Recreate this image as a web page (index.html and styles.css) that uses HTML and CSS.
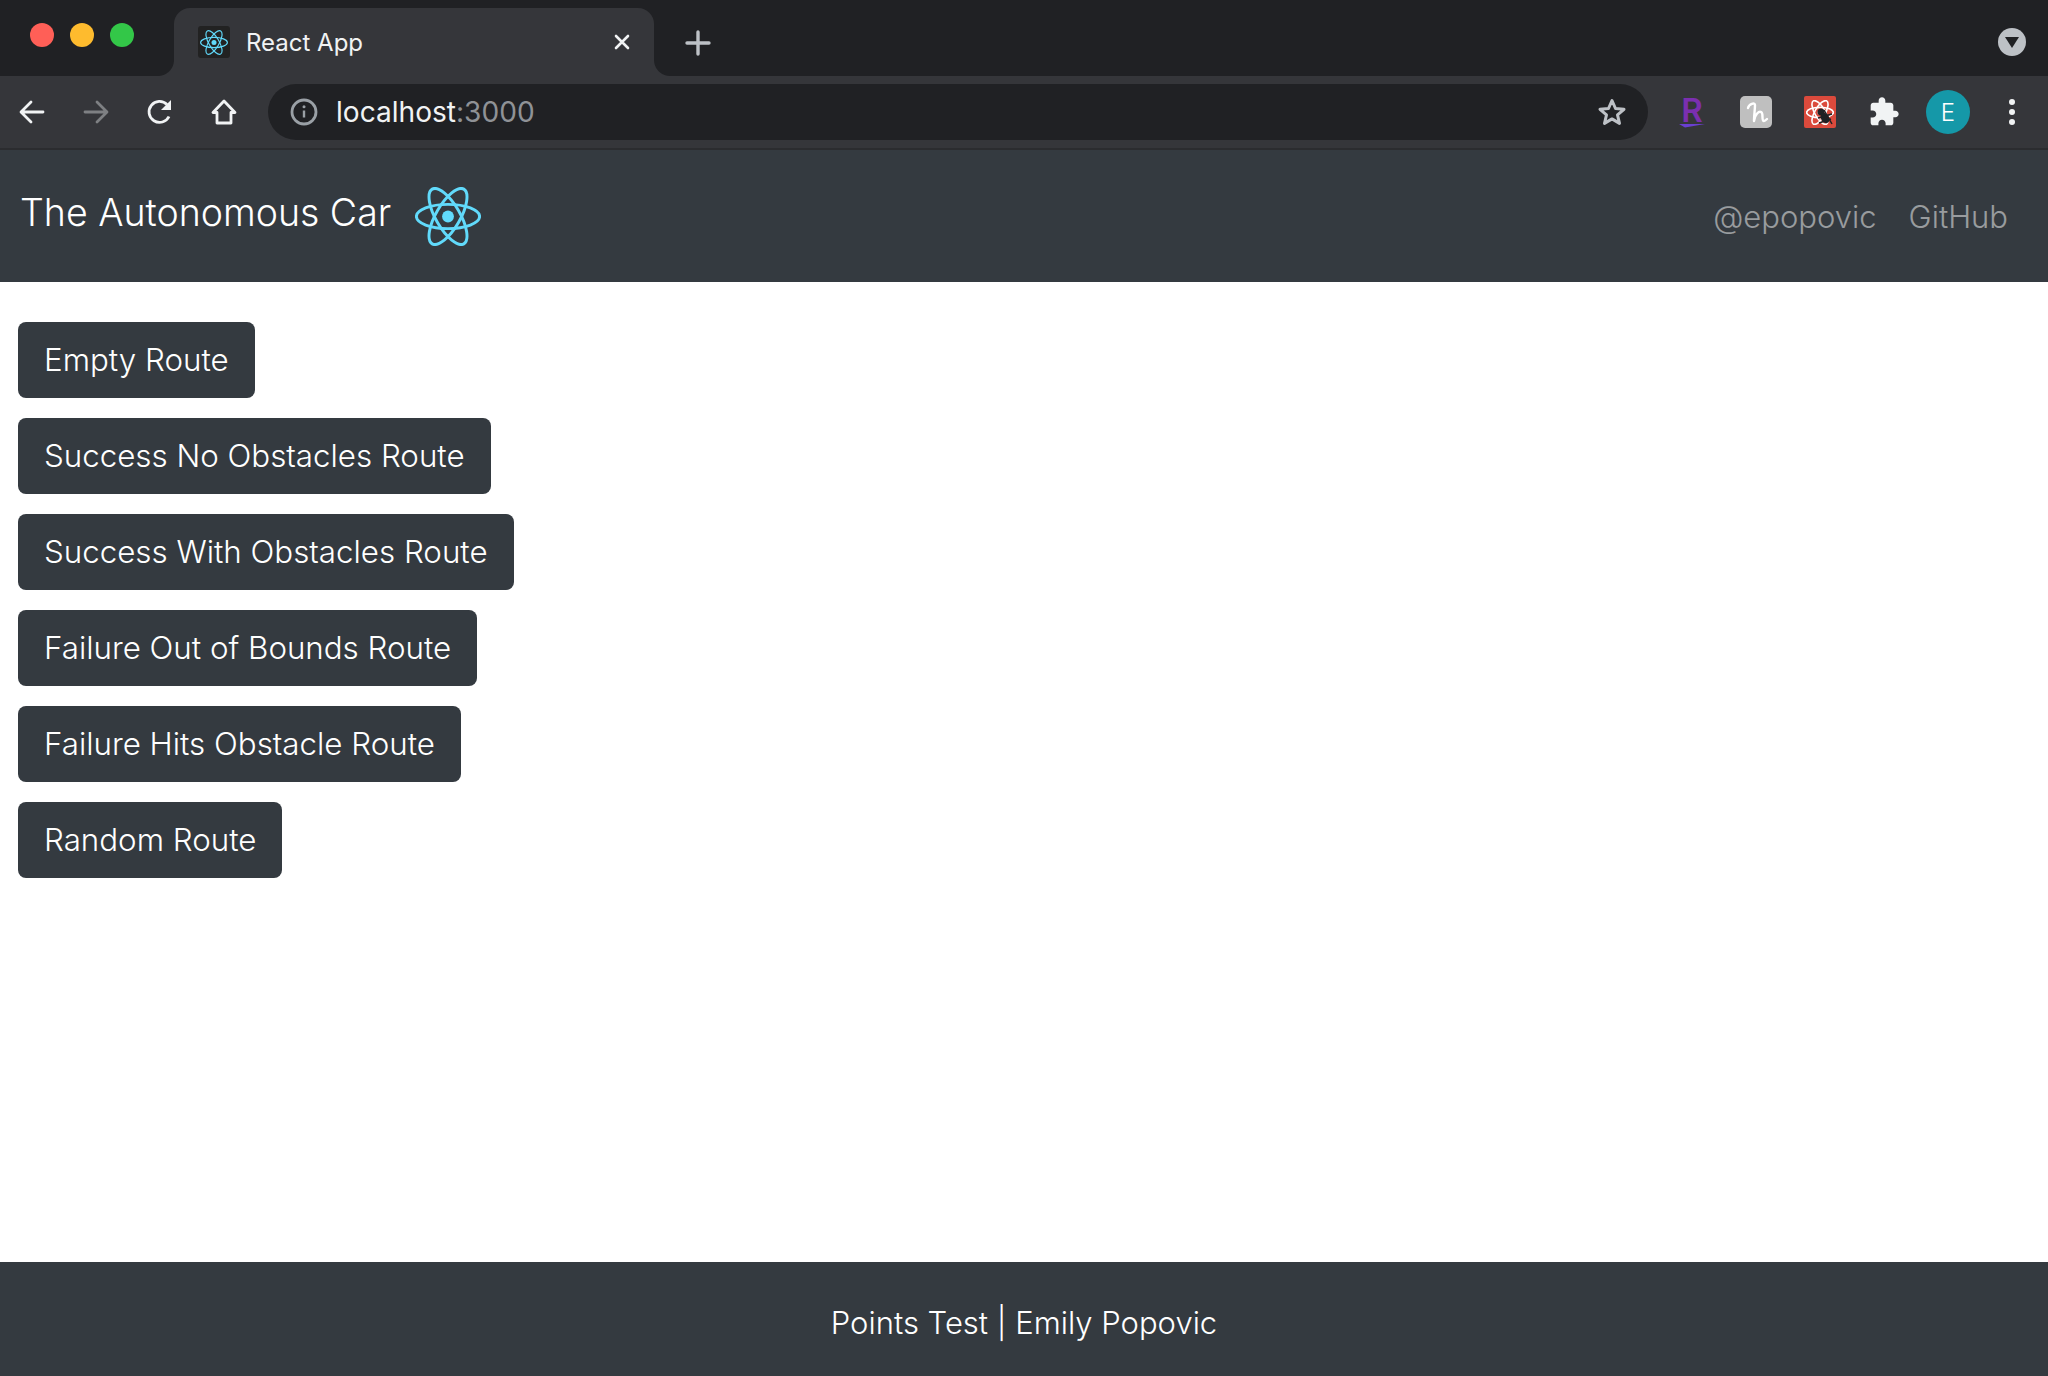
FILE: index.html
```html
<!DOCTYPE html>
<html lang="en">
<head>
    <meta charset="UTF-8">
    <title>React App</title>
    <link rel="stylesheet" href="styles.css">
</head>
<body>
    <svg class="defs" width="0" height="0">
        <symbol id="atom" viewBox="0.7 4 62.6 56">
            <circle cx="32" cy="32" r="5.6" fill="currentColor"/>
            <g fill="none" stroke="currentColor">
                <ellipse cx="32" cy="32" rx="30" ry="11.5"/>
                <ellipse cx="32" cy="32" rx="30" ry="11.5" transform="rotate(60 32 32)"/>
                <ellipse cx="32" cy="32" rx="30" ry="11.5" transform="rotate(120 32 32)"/>
            </g>
        </symbol>
    </svg>

    <!-- Browser chrome -->
    <div class="tabstrip">
        <div class="lights">
            <span class="light red"></span>
            <span class="light yellow"></span>
            <span class="light green"></span>
        </div>
        <div class="tab">
            <span class="favicon"><svg width="28" height="25"><use href="#atom"/></svg></span>
            <span class="tab-title">React App</span>
            <svg class="tab-close" width="16" height="16" viewBox="0 0 16 16"><path d="M2 2l12 12M14 2L2 14" stroke="#f1f3f4" stroke-width="2.6" stroke-linecap="round"/></svg>
        </div>
        <svg class="new-tab" width="26" height="26" viewBox="0 0 26 26"><path d="M13 2v22M2 13h22" stroke="#bdc1c6" stroke-width="3.4" stroke-linecap="round"/></svg>
        <span class="tab-search"><svg width="14" height="11" viewBox="0 0 14 11"><path d="M0 0h14L7 11z" fill="#202124"/></svg></span>
    </div>

    <div class="toolbar">
        <svg class="tool" width="28" height="28" viewBox="0 0 28 28"><path d="M25 14H4M13 4L3 14l10 10" fill="none" stroke="#f1f3f4" stroke-width="2.8" stroke-linecap="round" stroke-linejoin="round"/></svg>
        <svg class="tool" width="28" height="28" viewBox="0 0 28 28"><path d="M3 14h21M15 4l10 10-10 10" fill="none" stroke="#7e8083" stroke-width="2.8" stroke-linecap="round" stroke-linejoin="round"/></svg>
        <svg class="tool" width="28" height="28" viewBox="0 0 28 28"><path d="M23 18.500A10.500 10.500 0 1 1 21 6.500" fill="none" stroke="#f1f3f4" stroke-width="2.8"/><path d="M25 2v10H15z" fill="#f1f3f4"/></svg>
        <svg class="tool" width="28" height="28" viewBox="0 0 28 28"><path d="M14 3L3 14.500h4V25h14V14.500h4z" fill="none" stroke="#f1f3f4" stroke-width="2.8" stroke-linejoin="round"/></svg>
        <div class="omnibox">
            <svg width="28" height="28" viewBox="0 0 28 28"><circle cx="14" cy="14" r="12" fill="none" stroke="#9aa0a6" stroke-width="2.800"/><path d="M14 12.500v7" stroke="#9aa0a6" stroke-width="2.400"/><circle cx="14" cy="8.800" r="1.500" fill="#9aa0a6"/></svg>
            <span class="url">localhost<span class="port">:3000</span></span>
            <svg class="star" width="30" height="30" viewBox="0 0 30 30"><path d="M15 3.500l3.500 8 8.500.8-6.500 5.600 2 8.500L15 21.900l-7.500 4.500 2-8.500L3 12.300l8.500-.8z" fill="none" stroke="#bdc1c6" stroke-width="3" stroke-linejoin="round"/></svg>
        </div>
        <div class="extensions">
            <span class="ext ext-r">R<svg width="26" height="4" viewBox="0 0 26 4"><path d="M0 0h26L6 3.500z" fill="#6a3fd1"/></svg></span>
            <span class="ext ext-h"><svg width="32" height="32" viewBox="0 0 32 32"><path d="M8 12C9 8 15 6 15 9 15 13 14 20 14 25 15 18 19 15 21 16 24 17 21 25 24 25 25 25 26 24 27 23" fill="none" stroke="white" stroke-width="2.400" stroke-linecap="round" stroke-linejoin="round"/></svg></span>
            <span class="ext ext-bug">
                <svg width="28" height="25"><use href="#atom"/></svg>
                <svg class="bug" width="18" height="18" viewBox="0 0 18 18"><circle cx="6" cy="5" r="3.500" fill="#202124"/><ellipse cx="10" cy="11" rx="4" ry="5.500" fill="#202124" transform="rotate(-30 10 11)"/><path d="M3 11l14-4M4 16l12-4M9 3l8 14" stroke="#202124" stroke-width="1.500"/></svg>
            </span>
            <svg class="ext" width="32" height="32" viewBox="0 0 24 24"><path d="M20.500 11H19V7c0-1.100-.9-2-2-2h-4V3.500C13 2.120 11.880 1 10.500 1S8 2.120 8 3.500V5H4c-1.100 0-1.990.9-1.990 2v3.800H3.500c1.490 0 2.700 1.210 2.700 2.700s-1.210 2.700-2.700 2.700H2V20c0 1.100.9 2 2 2h3.800v-1.500c0-1.490 1.210-2.700 2.700-2.700 1.490 0 2.700 1.210 2.700 2.700V22H17c1.100 0 2-.9 2-2v-4h1.500c1.380 0 2.500-1.120 2.500-2.500S21.880 11 20.500 11z" fill="#f1f3f4"/></svg>
            <span class="avatar">E</span>
            <span class="menu-dots"><i></i><i></i><i></i></span>
        </div>
    </div>

    <!-- Page -->
    <nav class="navbar">
        <div class="brand">
            <span class="brand-title">The Autonomous Car</span>
            <svg class="brand-logo" width="66" height="59"><use href="#atom"/></svg>
        </div>
        <div class="nav-links">
            <a href="#">@epopovic</a>
            <a href="#">GitHub</a>
        </div>
    </nav>

    <main class="routes">
        <button type="button">Empty Route</button>
        <button type="button">Success No Obstacles Route</button>
        <button type="button">Success With Obstacles Route</button>
        <button type="button">Failure Out of Bounds Route</button>
        <button type="button">Failure Hits Obstacle Route</button>
        <button type="button">Random Route</button>
    </main>

    <footer class="footer">Points Test | Emily Popovic</footer>
</body>
</html>
```

FILE: styles.css
```css
html, body {
    height: 100%;
}

body {
    margin: 0;
    display: flex;
    flex-direction: column;
    height: 1376px;
    overflow: hidden;
    background: white;
    font-family: Inter, "Noto Sans", sans-serif;
}

.defs {
    position: absolute;
}

/* Browser chrome */
.tabstrip {
    display: flex;
    align-items: flex-end;
    height: 76px;
    flex: none;
    background: #202124;
}

.lights {
    display: flex;
    gap: 16px;
    width: 174px;
    padding: 23px 0 0 30px;
    align-self: flex-start;
    box-sizing: border-box;
}

.light {
    width: 24px;
    height: 24px;
    border-radius: 50%;
}

.red { background: #ff5f57; }
.yellow { background: #febb2e; }
.green { background: #33c748; }

.tab {
    position: relative;
    display: flex;
    align-items: center;
    width: 480px;
    height: 68px;
    padding: 0 24px 0 24px;
    box-sizing: border-box;
    background: #35363a;
    border-radius: 16px 16px 0 0;
    color: #f1f3f4;
}

/* concave corners at the foot of the tab */
.tab::before,
.tab::after {
    content: "";
    position: absolute;
    bottom: 0;
    width: 16px;
    height: 16px;
}

.tab::before {
    left: -16px;
    background: radial-gradient(circle at 0 0, #202124 15.5px, #35363a 16.5px);
}

.tab::after {
    right: -16px;
    background: radial-gradient(circle at 100% 0, #202124 15.5px, #35363a 16.5px);
}

.favicon {
    display: flex;
    align-items: center;
    justify-content: center;
    width: 32px;
    height: 32px;
    border-radius: 3px;
    background: #222;
    color: #61dafb;
    stroke-width: 2.6;
}

.tab-title {
    margin-left: 16px;
    font-size: 24px;
    flex: 1;
}

.new-tab {
    margin: 0 0 20px 31px;
}

.tab-search {
    display: flex;
    align-items: center;
    justify-content: center;
    width: 28px;
    height: 28px;
    margin: 0 22px 20px auto;
    border-radius: 50%;
    background: #bdc1c6;
}

.toolbar {
    display: flex;
    align-items: center;
    height: 72px;
    flex: none;
    padding: 0 0 0 18px;
    background: #35363a;
    border-bottom: 2px solid #2b2c2f;
}

.tool {
    margin-right: 36px;
    flex: none;
}

.tool:nth-of-type(4) {
    margin-right: 30px;
}

.omnibox {
    display: flex;
    align-items: center;
    width: 1380px;
    height: 56px;
    padding: 0 21px 0 22px;
    box-sizing: border-box;
    flex: none;
    background: #202124;
    border-radius: 28px;
}

.url {
    margin-left: 18px;
    flex: 1;
    font-size: 28.1px;
    color: #f1f3f4;
}

.port {
    color: #8f9296;
}

.extensions {
    display: flex;
    align-items: center;
    flex: 1;
    padding-left: 28px;
    gap: 32px;
}

.ext {
    display: flex;
    align-items: center;
    justify-content: center;
    position: relative;
    width: 32px;
    height: 32px;
    flex: none;
}

.ext-r {
    flex-direction: column;
    color: #7b2fb0;
    font-size: 33px;
    font-weight: 600;
    line-height: 28px;
}

.ext-h {
    border-radius: 5px;
    background: #bfbfbf;
}

.ext-bug {
    background: #db4a3c;
    border-radius: 2px;
    color: white;
    stroke-width: 3.6;
}

.bug {
    position: absolute;
    left: 11px;
    top: 11px;
}

.avatar {
    display: flex;
    align-items: center;
    justify-content: center;
    width: 44px;
    height: 44px;
    flex: none;
    margin-left: -6px;
    border-radius: 50%;
    background: #1598a8;
    color: white;
    font-size: 24px;
    font-weight: 300;
}

.menu-dots {
    display: flex;
    flex-direction: column;
    gap: 4px;
    margin-left: 7px;
}

.menu-dots i {
    width: 6px;
    height: 6px;
    border-radius: 50%;
    background: #f1f3f4;
}

/* Page */
.navbar {
    display: flex;
    align-items: center;
    justify-content: space-between;
    height: 132px;
    flex: none;
    padding: 0 40px 0 20px;
    background: #343a40;
}

.brand {
    display: flex;
    align-items: center;
    gap: 24px;
    font-size: 37.5px;
    font-weight: 350;
    color: white;
}

.brand-title {
    margin-bottom: 8px;
}

.brand-logo {
    color: #61dafb;
    stroke-width: 2.8;
}

.nav-links {
    display: flex;
    gap: 32px;
}

.nav-links a {
    font-size: 31px;
    font-weight: 350;
    color: rgba(255, 255, 255, 0.5);
    text-decoration: none;
}

.routes {
    display: flex;
    flex: 1;
    flex-direction: column;
    align-items: flex-start;
    gap: 20px;
    padding: 40px 18px 0;
}

button {
    height: 76px;
    padding: 0 26px;
    border: none;
    border-radius: 8px;
    background: #343a40;
    color: white;
    font-family: inherit;
    font-size: 31.3px;
    font-weight: 350;
}

.footer {
    display: flex;
    align-items: center;
    justify-content: center;
    height: 114px;
    padding-top: 6px;
    box-sizing: border-box;
    flex: none;
    background: #343a40;
    color: white;
    font-size: 31px;
    font-weight: 350;
}
```
